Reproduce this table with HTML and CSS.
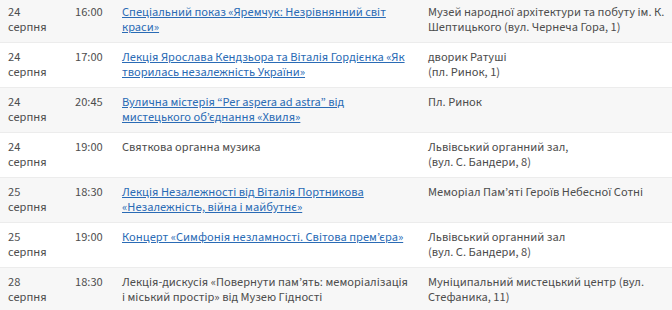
FILE: index.html
```html
<!DOCTYPE html>
<html lang="uk">
<head>
<meta charset="utf-8">
<link rel="stylesheet" href="styles.css">
</head>
<body>
<table class="events">
<tbody>
<tr class="odd">
<td class="date">24<br>серпня</td>
<td class="time">16:00</td>
<td class="title"><a href="#">Спеціальний показ «Яремчук: Незрівнянний світ краси»</a></td>
<td class="place">Музей народної архітектури та побуту ім. К. Шептицького (вул. Чернеча Гора, 1)</td>
</tr>
<tr class="even">
<td class="date">24<br>серпня</td>
<td class="time">17:00</td>
<td class="title"><a href="#">Лекція Ярослава Кендзьора та Віталія Гордієнка «Як творилась незалежність України»</a></td>
<td class="place">дворик Ратуші<br>(пл. Ринок, 1)</td>
</tr>
<tr class="odd">
<td class="date">24<br>серпня</td>
<td class="time">20:45</td>
<td class="title"><a href="#">Вулична містерія “Per aspera ad astra” від мистецького об’єднання «Хвиля»</a></td>
<td class="place">Пл. Ринок</td>
</tr>
<tr class="even">
<td class="date">24<br>серпня</td>
<td class="time">19:00</td>
<td class="title">Святкова органна музика</td>
<td class="place">Львівський органний зал,<br>(вул. С. Бандери, 8)</td>
</tr>
<tr class="odd">
<td class="date">25<br>серпня</td>
<td class="time">18:30</td>
<td class="title"><a href="#">Лекція Незалежності від Віталія Портникова «Незалежність, війна і майбутнє»</a></td>
<td class="place">Меморіал Пам’яті Героїв Небесної Сотні</td>
</tr>
<tr class="even">
<td class="date">25<br>серпня</td>
<td class="time">19:00</td>
<td class="title"><a href="#">Концерт «Симфонія незламності. Світова прем’єра»</a></td>
<td class="place">Львівський органний зал<br>(вул. С. Бандери, 8)</td>
</tr>
<tr class="odd">
<td class="date">28<br>серпня</td>
<td class="time">18:30</td>
<td class="title">Лекція-дискусія «Повернути пам’ять: меморіалізація і міський простір» від Музею Гідності</td>
<td class="place">Муніципальний мистецький центр (вул. Стефаника, 11)</td>
</tr>
</tbody>
</table>
</body>
</html>
```
FILE: styles.css
```css
html, body {
  margin: 0;
  padding: 0;
  background: #fff;
}
body {
  font-family: "Source Sans Pro", "Source Sans 3", "Noto Sans", sans-serif;
  font-size: 12.4px;
  line-height: 15px;
  color: #4d4d4d;
  overflow: hidden;
}
.events {
  width: 672px;
  border-collapse: collapse;
  table-layout: fixed;
  margin-top: -2px;
}
.events td {
  vertical-align: top;
  padding: 7px 0 7px 0;
  height: 30px;
  border-bottom: 1px solid #ececec;
}
.events tr.odd td {
  background: #f7f7f7;
}
.events tr.even td {
  background: #fff;
}
.events td.date { width: 67px; padding-left: 8px; }
.events td.time { width: 47px; }
.events td.title { width: 286px; padding-right: 20px; }
.events td.place { width: auto; padding-right: 4px; }
.title a {
  color: #2a6bb5;
  text-decoration: underline;
}
```
